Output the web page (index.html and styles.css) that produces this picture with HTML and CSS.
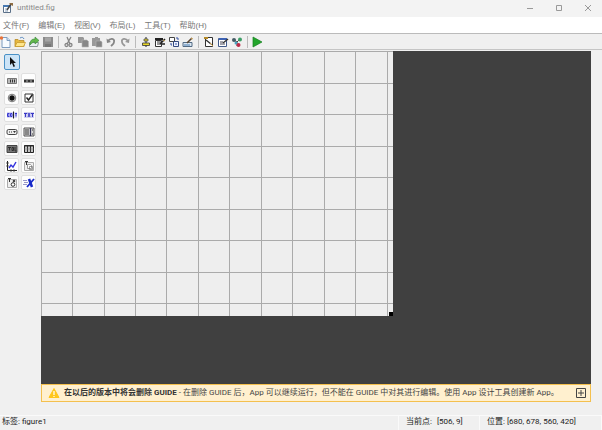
FILE: index.html
```html
<!DOCTYPE html>
<html lang="zh-CN">
<head>
<meta charset="utf-8">
<title>untitled.fig</title>
<link rel="stylesheet" href="styles.css">
</head>
<body>
<header class="titlebar">
  <svg class="app-icon" viewBox="0 0 12 12"><path d="M1.500 3.500h7v7h-7z" fill="#fff" stroke="#5b7089"/><path d="M1 3h8v2H1z" fill="#4779b2"/><path d="M3 7h3M3 9h3" stroke="#8ba3be"/><path d="M5 8l4-6" fill="none" stroke="#444" stroke-width="1.500"/><path d="M7 1h4v3L9 3z" fill="#8e6d43"/></svg>
  <span class="title">untitled.fig</span>
  <button class="window-button" aria-label="最小化"><svg viewBox="0 0 8 8"><path d="M1 4.500h6"/></svg></button>
  <button class="window-button" aria-label="最大化"><svg viewBox="0 0 8 8"><path d="M1.500 1.500h5v5h-5z"/></svg></button>
  <button class="window-button" aria-label="关闭"><svg viewBox="0 0 8 8"><path d="M1 1l6 6M7 1L1 7"/></svg></button>
</header>
<nav class="menubar">
  <button>文件(F)</button><button>编辑(E)</button><button>视图(V)</button><button>布局(L)</button><button>工具(T)</button><button>帮助(H)</button>
</nav>
<div class="toolbar" role="toolbar">
  <div class="tool-group">
    <button aria-label="新建"><svg viewBox="0 0 12 12"><path d="M2 1.500h5l3 3v7H2z" fill="#f7fbff" stroke="#7c9cc0"/><path d="M7 1.500v3h3" fill="#cfe0f2" stroke="#7c9cc0"/><circle cx="1.500" cy="2" r="1.700" fill="#e8743b"/></svg></button>
    <button aria-label="打开"><svg viewBox="0 0 12 12"><path d="M1 10.500v-7h3l1 1h5v6z" fill="#e7b83f" stroke="#b98c27" stroke-width=".8"/><path d="M1 10.500l2-4h8.500l-2 4z" fill="#ffe58a" stroke="#c69a30" stroke-width=".8"/><path d="M6 2c2-1 3-1 4 1" fill="none" stroke="#5a8ac0"/></svg></button>
    <button aria-label="导入"><svg viewBox="0 0 12 12"><path d="M1.500 6.500h9l-1 4h-8z" fill="#e8eef0" stroke="#8a9698"/><path d="M2 9c0-5 2-6 5-6V1l4 3.500L7 8V6C5 6 4 7 2 9z" fill="#62b84b" stroke="#36853a" stroke-width=".6"/></svg></button>
    <button aria-label="保存" disabled><svg viewBox="0 0 12 12"><path d="M1 1h10v10H1z" fill="#8b8b8b"/><path d="M3 1.500h6v4H3z" fill="#a4a4a4"/><path d="M3 8h6v3H3z" fill="#777"/></svg></button>
  </div>
  <span class="separator"></span>
  <div class="tool-group">
    <button aria-label="剪切" disabled><svg viewBox="0 0 12 12"><path d="M4 1l3 7M8 1L4 8" stroke="#858585" stroke-width="1.300"/><circle cx="3.500" cy="9" r="1.500" fill="none" stroke="#858585" stroke-width="1.300"/><circle cx="7.500" cy="9" r="1.500" fill="none" stroke="#858585" stroke-width="1.300"/></svg></button>
    <button aria-label="复制" disabled><svg viewBox="0 0 12 12"><path d="M1 1h5l1 1v5H1z" fill="#979797"/><path d="M5 4h5l1.500 1.500V11H5z" fill="#888" stroke="#b5b5b5" stroke-width=".6"/></svg></button>
    <button aria-label="粘贴" disabled><svg viewBox="0 0 12 12"><path d="M1 2h3V1h3v1h2v8H1z" fill="#999"/><path d="M5 5h5l1 1v5H5z" fill="#858585" stroke="#b5b5b5" stroke-width=".6"/></svg></button>
    <button aria-label="撤消" disabled><svg viewBox="0 0 12 12"><path d="M3 5c2-3 7-3 6 1 0 2-2 3-3 4" fill="none" stroke="#858585" stroke-width="1.800"/><path d="M1.500 2.500l.5 4.500 4-1z" fill="#858585"/></svg></button>
    <button aria-label="重做" disabled><svg viewBox="0 0 12 12"><path d="M9 5C7 2 2 2 3 6c0 2 2 3 3 4" fill="none" stroke="#979797" stroke-width="1.800"/><path d="M10.500 2.500L10 7 6 6z" fill="#979797"/></svg></button>
  </div>
  <span class="separator"></span>
  <div class="tool-group">
    <button aria-label="对齐对象"><svg viewBox="0 0 12 12"><path d="M6 1v10" stroke="#222"/><path d="M4 3h4v2H4z" fill="#e8d72a" stroke="#444" stroke-width=".7"/><path d="M2.500 7h7v2.500h-7z" fill="#e8d72a" stroke="#333" stroke-width=".8"/></svg></button>
    <button aria-label="菜单编辑器"><svg viewBox="0 0 12 12"><path d="M1 2h8v2H1z" fill="#222"/><path d="M1.500 4.500h6v6h-6z" fill="#fff" stroke="#333"/><path d="M3 6h4M3 8h4" stroke="#333"/><path d="M6 8l5-5M8 8h3" stroke="#222" stroke-width="1.500"/><path d="M9 4l2 1" stroke="#c59a4e"/></svg></button>
    <button aria-label="Tab 键顺序编辑器"><svg viewBox="0 0 12 12"><path d="M1.500 1.500h5v4h-5z" fill="#fff" stroke="#444"/><path d="M5.500 5.500h5v5h-5z" fill="#edf2ff" stroke="#34497e"/><path d="M8 2h2v2M3 7v2h1M7 8h2" fill="none" stroke="#3653a5"/></svg></button>
    <button aria-label="工具栏编辑器"><svg viewBox="0 0 12 12"><path d="M1 6.500h9v4H1z" fill="#dce7f2" stroke="#526b84"/><path d="M2 9h6" stroke="#467cb4"/><path d="M5 7l5-5" stroke="#5a4632" stroke-width="1.600"/><path d="M9 2l2 1" stroke="#d4ab5e"/></svg></button>
  </div>
  <span class="separator"></span>
  <div class="tool-group">
    <button aria-label="编辑器"><svg viewBox="0 0 12 12"><path d="M2.500 1.500h7v9h-7z" fill="#fff" stroke="#333"/><path d="M3 4l5 4" stroke="#333" stroke-width="1.500"/><path d="M1 1h4v2H1z" fill="#b38826"/><path d="M7 7l3 3" stroke="#c4953b"/></svg></button>
    <button aria-label="属性检查器"><svg viewBox="0 0 12 12"><path d="M1.500 2.500h8v8h-8z" fill="#fff" stroke="#425a89"/><path d="M2 2h8v2H2z" fill="#3e63b4"/><path d="M3 6h3M3 8h5" stroke="#445"/><path d="M6 7l5-4" stroke="#333" stroke-width="1.500"/></svg></button>
    <button aria-label="对象浏览器"><svg viewBox="0 0 12 12"><path d="M3 4l3 2 3-3M6 6v4" stroke="#444" fill="none"/><circle cx="3" cy="4" r="2" fill="#445b64"/><circle cx="9" cy="3.500" r="2" fill="#3d9f67"/><circle cx="5" cy="7" r="1.500" fill="#47a4c0"/><circle cx="7.500" cy="9" r="2" fill="#bd2947"/></svg></button>
  </div>
  <span class="separator"></span>
  <div class="tool-group">
    <button aria-label="运行"><svg viewBox="0 0 12 12"><path d="M1 1l9 5-9 5z" fill="#23a52c" stroke="#158020" stroke-width=".7"/></svg></button>
  </div>
</div>
<main class="workspace">
  <aside class="palette">
    <button class="selected" aria-label="选择"><svg viewBox="0 0 12 12"><path d="M4 1v8l2-2 1.500 4 1.500-.7L7.500 7H10z" fill="#111"/></svg></button>
    <div class="components">
      <button aria-label="按钮"><svg viewBox="0 0 12 12"><path d="M1.500 3.500h9v5h-9z" fill="#bbb" stroke="#777"/><path d="M4.500 4.500v3M6.500 4.500v3M8.500 4.500v3" stroke="#333"/></svg></button>
      <button aria-label="滑块"><svg viewBox="0 0 12 12"><path d="M1 4.500h10v3H1z" fill="#333"/><path d="M3 6h2M7 6h2" stroke="#bbb"/></svg></button>
      <button aria-label="单选按钮"><svg viewBox="0 0 12 12"><circle cx="6" cy="6" r="3.800" fill="#fff" stroke="#777"/><circle cx="6" cy="6" r="2.700" fill="#111"/></svg></button>
      <button aria-label="复选框"><svg viewBox="0 0 12 12"><path d="M2 2h8v8H2z" fill="#fff" stroke="#333"/><path d="M3.500 5.500L5.500 8l4-5.500" fill="none" stroke="#222" stroke-width="1.400"/></svg></button>
      <button aria-label="可编辑文本"><svg viewBox="0 0 12 12"><path d="M1 3h10v6H1z" fill="#d9d9f5"/><path d="M3.500 4.500h-2v3h2M1.500 6h2M4.500 4.500v3H6v-3zM9 4.500h2M10 4.500v3" fill="none" stroke="#3939d0"/><path d="M7.500 2.500v7" stroke="#222"/></svg></button>
      <button aria-label="静态文本"><svg viewBox="0 0 12 12"><path d="M1 3h10v6H1z" fill="#d0d0f0"/><path d="M1 4.500h3M2.500 4v4M5 4l2 4M7 4L5 8M8 4.500h3M9.500 4v4" fill="none" stroke="#3838c5"/></svg></button>
      <button aria-label="弹出式菜单"><svg viewBox="0 0 12 12"><rect x="1" y="3.500" width="10" height="5" rx="1.500" fill="#eee" stroke="#444"/><path d="M3 6h1M5 6h1" stroke="#333"/><path d="M7 5h3L8.500 7z" fill="#333"/></svg></button>
      <button aria-label="列表框"><svg viewBox="0 0 12 12"><path d="M1 2h10v8H1z" fill="#ddd" stroke="#555"/><path d="M2 4h4M2 6h4M2 8h4" stroke="#333"/><path d="M7.500 2v8" stroke="#335" stroke-width="1.300"/><path d="M9 4h1M9 8h1" stroke="#333"/></svg></button>
      <button aria-label="切换按钮"><svg viewBox="0 0 12 12"><path d="M1 2.500h10v7H1z" fill="#777" stroke="#444"/><path d="M2 4.500h3M3.500 4.500v3M6 4.500h1.500v3H6zM9 4v4h1.500" fill="none" stroke="#222" stroke-width=".8"/></svg></button>
      <button aria-label="表"><svg viewBox="0 0 12 12"><path d="M1.500 2.500h9v7h-9z" fill="#c5c5c5" stroke="#222"/><path d="M1 3h10M4.500 3v7M7.500 3v7" stroke="#333"/><path d="M1 6h10" stroke="#777" stroke-width=".5"/></svg></button>
      <button aria-label="坐标区"><svg viewBox="0 0 12 12"><path d="M1.500 1v9.500H11" fill="none" stroke="#222"/><path d="M0 3h3M0 6h3M5 9v3M8 9v3" stroke="#444" stroke-width=".8"/><path d="M3 8l2-3 2 2 3-5" fill="none" stroke="#3131dc" stroke-width="1.400"/></svg></button>
      <button aria-label="面板"><svg viewBox="0 0 12 12"><path d="M1.500 2.500h9v8h-9z" fill="#eee" stroke="#aaa"/><path d="M2 1.500h3M3.500 1v4" stroke="#333"/><path d="M4.500 4.500h3l1 1v3h-4zM6.500 6.500h3v3h-3z" fill="#fff" stroke="#777" stroke-width=".7"/></svg></button>
      <button aria-label="按钮组"><svg viewBox="0 0 12 12"><path d="M1.500 2.500h9v8h-9z" fill="#eee" stroke="#aaa"/><path d="M2 1.500h3M3.500 1v4" stroke="#333"/><circle cx="8" cy="4" r="1.300" fill="#444"/><circle cx="7" cy="7.500" r="1.800" fill="#fff" stroke="#333"/></svg></button>
      <button aria-label="ActiveX 控件"><svg viewBox="0 0 12 12"><path d="M0 3.500h4M1 5.500h4M0 7.500h4" stroke="#7c7cbb" stroke-width=".8"/><path d="M6 2l3 8" stroke="#1729c9" stroke-width="2.500"/><path d="M11 2l-7 8" stroke="#1729c9" stroke-width="1.800"/></svg></button>
    </div>
  </aside>
  <section class="editor">
    <div class="stage">
      <svg class="figure" viewBox="0 0 352 265" aria-label="figure1">
        <path fill="#eee" d="M0 0h352v265H0z"/>
        <path fill="none" stroke="#aaa" d="M0 .5h352M0 32.500h352M0 63.500h352M0 95.500h352M0 126.500h352M0 158.500h352M0 189.500h352M0 221.500h352M0 252.500h352M.5 0v265M31.500 0v265M63.500 0v265M94.500 0v265M125.500 0v265M157.500 0v265M188.500 0v265M220.500 0v265M251.500 0v265M283.500 0v265M314.500 0v265M346.500 0v265"/>
        <path d="M348 261h4v4h-4z"/>
      </svg>
    </div>
    <div class="notice" role="alert">
      <svg class="warning" viewBox="0 0 12 12"><path d="M6 1.500L11 10.500H1z" fill="#ffc61a" stroke="#ffc61a" stroke-linejoin="round"/><path d="M6 4v4M6 9v1" stroke="#fff" stroke-width="1.200"/></svg>
      <p><strong>在以后的版本中将会删除 GUIDE</strong> - 在删除 GUIDE 后，App 可以继续运行，但不能在 GUIDE 中对其进行编辑。使用 App 设计工具创建新 App。</p>
      <button class="expand" aria-label="展开"><svg viewBox="0 0 10 10"><path d="M.5.5h9v9h-9zM2 5h6M5 2v6" fill="none" stroke="#444"/></svg></button>
    </div>
  </section>
</main>
<footer class="statusbar">
  <div class="status-tag">标签: figure1</div>
  <div class="status-point"><span>当前点:</span><span>[506, 9]</span></div>
  <div class="status-position"><span>位置: [680, 678, 560, 420]</span></div>
</footer>
</body>
</html>
```
FILE: styles.css
```css
* { box-sizing: border-box; }
body {
  margin: 0;
  min-height: 100vh;
  display: flex;
  flex-direction: column;
  background: #f0f0f0;
  color: #222;
  font: 8px/12px Roboto, "Noto Sans CJK SC", sans-serif;
}
button {
  display: flex;
  align-items: center;
  justify-content: center;
  padding: 0;
  border: 0;
  background: transparent;
  color: inherit;
  font: inherit;
}
svg { display: block; flex: none; }
.titlebar { display: flex; align-items: center; height: 17px; padding: 0 0 2px 2px; background: #f3f3f3; color: #888; }
.app-icon { width: 12px; height: 12px; margin-right: 3px; }
.title { flex: 1; }
.window-button { width: 29px; height: 14px; }
.window-button svg { width: 8px; height: 8px; fill: none; stroke: #999; }
.menubar { display: flex; gap: 9px; height: 17px; padding: 1px 3px 0; background: #fff; border-bottom: 1px solid #bbb; color: #777; font-family: "Liberation Sans", "Noto Sans CJK SC", sans-serif; }
.toolbar { display: flex; align-items: center; height: 16px; border-bottom: 1px solid #c5c5c5; }
.tool-group { display: flex; gap: 3px; }
.tool-group button { width: 11px; height: 14px; }
.tool-group svg { width: 12px; height: 12px; }
.separator { width: 1px; height: 12px; margin: 0 4px 0 5px; background: #bbb; }
.workspace { flex: 1; display: flex; padding: 1px 11px 13px 4px; }
.palette { width: 37px; flex: none; padding-top: 3px; }
.palette button { width: 15px; height: 15px; border: 1px solid #e0e0e0; border-radius: 2px; background: #fdfdfd; }
.palette svg { width: 12px; height: 12px; }
.palette .selected { width: 16px; height: 16px; border-color: #4a91c6; background: #cce4f7; }
.components { display: grid; grid-template-columns: 15px 15px; gap: 2px; padding-top: 3px; }
.editor { flex: 1; min-width: 0; display: flex; flex-direction: column; }
.stage { flex: 1; background: #404040; }
.figure { width: 352px; height: 265px; }
.notice { display: flex; align-items: center; height: 18px; padding: 0 4px 0 6px; border: 1px solid #f4c04e; background: #fff0cf; color: #444; }
.notice p { flex: 1; margin: 0; white-space: nowrap; }
.notice strong { color: #333; }
.warning { width: 12px; height: 12px; margin-right: 4px; }
.expand { width: 10px; height: 10px; }
.expand svg { width: 10px; height: 10px; }
.statusbar { display: flex; gap: 3px; height: 15px; border-top: 1px solid #fafafa; }
.statusbar div { border-right: 1px solid #fafafa; white-space: nowrap; }
.status-tag { flex: 1; padding-left: 2px; }
.status-point { display: flex; gap: 5px; width: 78px; padding-left: 4px; }
.status-position { width: 119px; padding-left: 4px; }
```
